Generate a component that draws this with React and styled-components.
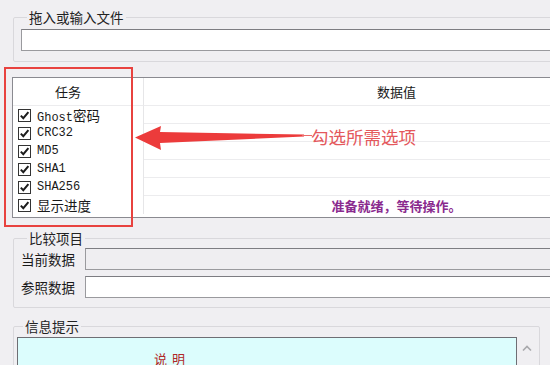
import React from 'react';
import styled, { createGlobalStyle } from 'styled-components';

const GlobalStyle = createGlobalStyle`
  html, body {
    margin: 0;
    padding: 0;
    background: #f0eff2;
    overflow: hidden;
  }
  * {
    box-sizing: border-box;
  }
`;

const cjk = `"Noto Sans CJK SC", "Noto Sans", sans-serif`;
const mono = `"Liberation Mono", "Noto Sans CJK SC", monospace`;

const Page = styled.div`
  position: relative;
  width: 660px;
  height: 365px;
  padding: 8px 0 0 12px;
  font-family: ${cjk};
  color: #1a1a1a;
`;

const Group = styled.fieldset`
  margin: ${({ $top }) => $top || 0}px 0 0 1px;
  width: ${({ $width }) => ($width ? `${$width}px` : 'auto')};
  padding: ${({ $pad }) => $pad};
  border: 1px solid #d9d8dc;
  border-radius: 2px;
  min-width: 0;
`;

const Legend = styled.legend`
  padding: 0 2px;
  margin-left: 6px;
  font-size: 13.5px;
  line-height: 18px;
  color: #222;
`;

const TextBox = styled.div`
  height: 22px;
  width: ${({ $width }) => ($width ? `${$width}px` : '100%')};
  background: ${({ $disabled }) => ($disabled ? '#efeef1' : '#ffffff')};
  border: 1px solid #9a9a9e;
  border-top-color: #7d7d82;
`;

const Table = styled.div`
  margin-top: 15px;
  width: 638px;
  height: 141px;
  background: #fff;
  border: 1px solid #8a8a90;
  display: grid;
  grid-template-columns: 131px 1fr;
  grid-template-rows: 28px repeat(6, 18px);
  align-content: start;
`;

const HeadCell = styled.div`
  display: flex;
  align-items: center;
  justify-content: center;
  font-size: 13px;
  border-bottom: 1px solid #ececee;
  border-right: ${({ $first }) => ($first ? '1px solid #e6e6e8' : 'none')};
  padding-right: ${({ $first }) => ($first ? '20px' : '0')};
`;

const TaskCell = styled.label`
  display: flex;
  align-items: center;
  gap: 6px;
  padding-left: 5px;
  font-family: ${mono};
  font-size: 12px;
  border-right: 1px solid #e6e6e8;
`;

const DataCell = styled.div`
  display: flex;
  align-items: center;
  justify-content: center;
  border-bottom: ${({ $last }) => ($last ? 'none' : '1px solid #ececee')};
  font-size: 13px;
  font-weight: 600;
  color: #8a2a8e;
`;

const Box = styled.span`
  width: 13px;
  height: 13px;
  background: #fff;
  border: 1px solid #333;
  display: flex;
  align-items: center;
  justify-content: center;
  flex-shrink: 0;
`;

const CjkText = styled.span`
  font-family: ${cjk};
  font-size: 13.5px;
`;

const FormRow = styled.div`
  display: flex;
  align-items: center;
  margin-top: ${({ $gap }) => $gap || 0}px;
`;

const FieldLabel = styled.span`
  width: 64px;
  font-size: 13.5px;
  line-height: 22px;
`;

const InfoBody = styled.div`
  display: flex;
  height: 40px;
`;

const InfoPane = styled.div`
  width: 500px;
  background: #dcfdfd;
  border-top: 1px solid #6e6e74;
  border-left: 1px solid #6e6e74;
  border-right: 1px solid #6e6e74;
  padding: 11px 0 0 136px;
  font-size: 13px;
  color: #b02828;
  letter-spacing: 1px;
`;

const ScrollBar = styled.div`
  width: 20px;
  display: flex;
  justify-content: center;
  padding-top: 8px;
`;

const Annotation = styled.div`
  position: absolute;
  left: 0;
  top: 0;
  width: 550px;
  height: 365px;
  pointer-events: none;
`;

const Highlight = styled.div`
  position: absolute;
  left: 4px;
  top: 67px;
  width: 129px;
  height: 160px;
  border: 2.5px solid #e8423f;
`;

const Arrow = styled.svg`
  position: absolute;
  left: 134px;
  top: 122px;
`;

const Hint = styled.span`
  position: absolute;
  left: 311px;
  top: 125px;
  font-size: 17.5px;
  line-height: 24px;
  color: #e4585c;
`;

const Check = () => (
  <Box>
    <svg width="11" height="11" viewBox="0 0 11 11">
      <path d="M1.8 5.6 L4.3 8.2 L9.4 2.2" fill="none" stroke="#1c1c1c" strokeWidth="2" />
    </svg>
  </Box>
);

const tasks = ['Ghost密码', 'CRC32', 'MD5', 'SHA1', 'SHA256', '显示进度'];

const renderTask = (name) =>
  name.split(/([\u4e00-\u9fa5]+)/).map((part, i) =>
    /[\u4e00-\u9fa5]/.test(part) ? <CjkText key={i}>{part}</CjkText> : part
  );

export default function App() {
  return (
    <>
      <GlobalStyle />
      <Page>
        <Group $pad="3px 0 10px 7px">
          <Legend>拖入或输入文件</Legend>
          <TextBox />
        </Group>

        <Table>
          <HeadCell $first>任务</HeadCell>
          <HeadCell>数据值</HeadCell>
          {tasks.map((t, i) => (
            <React.Fragment key={t}>
              <TaskCell>
                <Check />
                <span>{renderTask(t)}</span>
              </TaskCell>
              <DataCell $last={i === tasks.length - 1}>
                {i === tasks.length - 1 ? '准备就绪，等待操作。' : ''}
              </DataCell>
            </React.Fragment>
          ))}
        </Table>

        <Group $top={11} $pad="1px 0 9px 7px">
          <Legend>比较项目</Legend>
          <FormRow>
            <FieldLabel>当前数据</FieldLabel>
            <TextBox $disabled $width={570} />
          </FormRow>
          <FormRow $gap={6}>
            <FieldLabel>参照数据</FieldLabel>
            <TextBox $width={570} />
          </FormRow>
        </Group>

        <Group $top={9} $width={527} $pad="2px 0 0 3px">
          <Legend>信息提示</Legend>
          <InfoBody>
            <InfoPane>说 明</InfoPane>
            <ScrollBar>
              <svg width="10" height="7" viewBox="0 0 10 7">
                <path d="M1 5.5 L5 1.5 L9 5.5" fill="none" stroke="#a8a8ac" strokeWidth="1.6" />
              </svg>
            </ScrollBar>
          </InfoBody>
        </Group>

        <Annotation>
          <Highlight />
          <Arrow width="180" height="32" viewBox="0 0 180 32">
            <path d="M1 15.5 L27 4 L26 10 L170 12.5 L170 14.5 L26 21 L27 28 Z" fill="#ec3b3b" />
            <line x1="168" y1="13.5" x2="178" y2="13.5" stroke="#ec6a6a" strokeWidth="1" />
          </Arrow>
          <Hint>勾选所需选项</Hint>
        </Annotation>
      </Page>
    </>
  );
}
